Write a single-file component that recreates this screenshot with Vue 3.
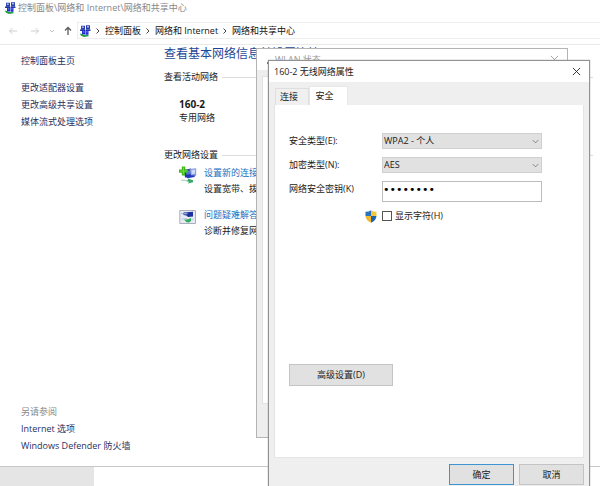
<script setup>
import { ref } from 'vue'

const crumbs = ['控制面板', '网络和 Internet', '网络和共享中心']
const tasks = ['更改适配器设置', '更改高级共享设置', '媒体流式处理选项']
const related = ['Internet 选项', 'Windows Defender 防火墙']
const security = ref('WPA2 - 个人')
const cipher = ref('AES')
const networkKey = ref('password')
const showChars = ref(false)
</script>

<template>
  <div class="window">
    <svg class="defs" width="0" height="0" aria-hidden="true">
      <symbol id="net" viewBox="0 0 12 12">
        <path d="M2 .8h4v4H2zM7 .3h4v4.200H7z" fill="#2a3fae" />
        <path d="M2.800 1.400h2v1.600h-2zM8 1h2v1.600H8z" fill="#a9b9ee" />
        <path d="M1 4.600h5V6H1zM6.600 4.400h4.900v1.500H6.600z" fill="#24379c" />
        <path d="M3 5.600h3v4H3zM6.500 5.600h3v4.200h-3z" fill="#1a2cd0" />
        <path d="M3.800 6.200h1.500v1.400H3.800zM7.200 6.200h1.500v1.400H7.200z" fill="#6f86ea" />
        <path d="M.8 8.400l2.500.5 1.700 1.200 4.500-.2v1.300L5 11.900 2 10.800z" fill="#22a048" />
      </symbol>
    </svg>

    <header class="titlebar">
      <svg class="app-icon"><use href="#net" /></svg>
      <span>控制面板\网络和 Internet\网络和共享中心</span>
    </header>

    <nav class="toolbar">
      <button class="nav" aria-label="后退"><svg viewBox="0 0 10 10"><path d="M9 5H1.500M4.500 2l-3 3 3 3" stroke="#cfcfcf" /></svg></button>
      <button class="nav fwd" aria-label="前进"><svg viewBox="0 0 10 10"><path d="M1 5h7.500M5.500 2l3 3-3 3" stroke="#cfcfcf" /></svg></button>
      <button class="nav recent" aria-label="最近"><svg viewBox="0 0 10 10"><path d="M3 4l2 2 2-2" stroke="#c0c0c0" /></svg></button>
      <button class="nav" aria-label="向上"><svg viewBox="0 0 10 10"><path d="M5 9V1.500M2 4.500l3-3 3 3" stroke="#5c5c5c" stroke-width="1.300" /></svg></button>
      <div class="address">
        <svg class="app-icon"><use href="#net" /></svg>
        <template v-for="c in crumbs" :key="c">
          <svg class="sep" viewBox="0 0 14 10"><path d="M5.500 2.500L8 5 5.500 7.500" stroke="#444" /></svg>
          <a href="#">{{ c }}</a>
        </template>
      </div>
    </nav>

    <div class="body">
      <aside class="side">
        <a class="home" href="#">控制面板主页</a>
        <a v-for="t in tasks" :key="t" href="#">{{ t }}</a>
        <div class="related">
          <span class="muted">另请参阅</span>
          <a v-for="r in related" :key="r" href="#">{{ r }}</a>
        </div>
      </aside>

      <main class="content">
        <h1>查看基本网络信息并设置连接</h1>
        <h2>查看活动网络</h2>
        <div class="active-net">
          <strong>160-2</strong>
          <span>专用网络</span>
        </div>
        <h2>更改网络设置</h2>
        <div class="action">
          <svg viewBox="0 0 18 18">
            <path d="M5 4l7-1.500V11l-6 .5z" fill="#1c2f9e" />
            <path d="M7 5l4-.8v4L7.500 9z" fill="#5570dc" />
            <path d="M10.500 3l6.700-.7v7.200l-5 1.800z" fill="#8799dc" />
            <path d="M12.500 4l3.700-.4v4l-3.700.9z" fill="#ced9f8" />
            <path d="M6.500 10l5.500-.8 4 .3-.5 1.500-7 1.200z" fill="#2138c4" />
            <path d="M2 14l7 .2V12.500l5 1.700v2L9 17.500l1-1.700z" fill="#35aa68" />
            <path d="M2 14l6 .5" stroke="#b9d8c7" />
            <path d="M2.800 .5h3.400v3h3v3.300h-3v2.700H2.800V6.800H0V3.500h2.800z" fill="#3fb81c" />
            <path d="M4.500 1.500v6.500M1 5.100h7" stroke="#74d840" />
          </svg>
          <div>
            <a href="#">设置新的连接或网络</a>
            <span>设置宽带、拨号或 VPN 连接</span>
          </div>
        </div>
        <div class="action second">
          <svg viewBox="0 0 18 18">
            <path d="M.8 2.500h15.700v13H.8z" fill="#e6eaf2" stroke="#a9b0bc" />
            <path d="M4.500 4.500l9.500-.7v4.700l-5 .5-1.500-1.500-3-.5z" fill="#1d2f9c" />
            <path d="M5 5l3.500-.2v1.400L5 6.500z" fill="#8fa6e2" />
            <path d="M2 5.500h2" stroke="#b3bdd0" />
            <path d="M5 11.500l4-.2 3-1.300v3l-2 1.500-2.500-.3z" fill="#32ac62" />
            <path d="M2.500 11l5.500-.3M12.500 11.500l2-.3" stroke="#b6c5dc" />
          </svg>
          <div>
            <a href="#">问题疑难解答</a>
            <span>诊断并修复网络问题</span>
          </div>
        </div>
      </main>
    </div>

    <footer class="status"><div></div></footer>

    <section class="status-dialog" aria-label="WLAN 状态">
      <header>
        <svg class="signal" viewBox="0 0 8 8"><path d="M0 6h2v2H0zM3 5h1v3H3z" fill="#3c9447" /></svg>
        <span>WLAN 状态</span>
        <button class="close" aria-label="关闭"><svg viewBox="0 0 10 10"><path d="M1 1l8 8M9 1L1 9" stroke="#999" /></svg></button>
      </header>
      <div class="sheet"></div>
    </section>

    <section class="dialog" role="dialog" aria-labelledby="dialog-title">
      <header>
        <span id="dialog-title">160-2 无线网络属性</span>
        <button class="close" aria-label="关闭"><svg viewBox="0 0 10 10"><path d="M1 1l8 8M9 1L1 9" stroke="#222" /></svg></button>
      </header>
      <div class="tabs" role="tablist">
        <button role="tab" aria-selected="false">连接</button>
        <button role="tab" aria-selected="true" class="on">安全</button>
      </div>
      <form class="page" @submit.prevent>
        <div class="field">
          <label for="sec">安全类型(E):</label>
          <div class="combo">
            <select id="sec" v-model="security"><option>WPA2 - 个人</option></select>
            <svg viewBox="0 0 10 10"><path d="M2 3.500l3 3 3-3" stroke="#777" /></svg>
          </div>
        </div>
        <div class="field">
          <label for="enc">加密类型(N):</label>
          <div class="combo">
            <select id="enc" v-model="cipher"><option>AES</option></select>
            <svg viewBox="0 0 10 10"><path d="M2 3.500l3 3 3-3" stroke="#777" /></svg>
          </div>
        </div>
        <div class="field">
          <label for="key">网络安全密钥(K)</label>
          <input id="key" v-model="networkKey" :type="showChars ? 'text' : 'password'" />
        </div>
        <div class="reveal">
          <svg viewBox="0 0 12 13">
            <path d="M6 .3Q8.500 2 11.500 1.800V6H6z" fill="#f4c443" />
            <path d="M6 .3Q3.500 2 .5 1.800V6H6z" fill="#2873bb" />
            <path d="M.5 6H6v6.700Q.9 10.500.5 6z" fill="#f2b731" />
            <path d="M11.500 6H6v6.700Q11.100 10.500 11.500 6z" fill="#1e64aa" />
          </svg>
          <input id="show" v-model="showChars" type="checkbox" />
          <label for="show">显示字符(H)</label>
        </div>
        <button class="btn advanced" type="button">高级设置(D)</button>
      </form>
      <div class="actions">
        <button class="btn primary">确定</button>
        <button class="btn">取消</button>
      </div>
    </section>
  </div>
</template>

<style>
body { margin: 0; background: #fff; }
</style>

<style scoped>
* { box-sizing: border-box; }
.window {
  position: relative;
  display: flex;
  flex-direction: column;
  height: 100vh;
  overflow: hidden;
  background: #fff;
  color: #1a1a1a;
  font: 9px/16px "Open Sans", "Noto Sans CJK SC", sans-serif;
  white-space: nowrap;
}
.defs { position: absolute; }
svg { display: block; flex: none; fill: none; }
a { color: inherit; text-decoration: none; }
button, input, select { font: inherit; color: inherit; margin: 0; padding: 0; }
.app-icon { width: 12px; height: 12px; }

.titlebar { display: flex; align-items: center; gap: 2px; height: 16px; padding-left: 4px; color: #888; }
.toolbar {
  display: flex;
  align-items: center;
  height: 29px;
  padding: 1px 0 0 8px;
  border-bottom: 1px solid #e9e9e9;
}
.nav { width: 10px; height: 10px; border: 0; background: none; }
.nav.fwd { margin-left: 12px; }
.nav.recent { margin: 0 6px 0 7px; }
.address {
  display: flex;
  align-items: center;
  flex: 1;
  height: 17px;
  margin-left: 4px;
  padding-left: 1px;
  border: 1px solid #ededed;
  border-right: 0;
  color: #111;
}
.sep { width: 14px; height: 10px; }

.body { display: flex; flex: 1; min-height: 0; }
.side {
  display: flex;
  flex-direction: column;
  width: 164px;
  padding: 7px 0 12px 21px;
  line-height: 17px;
  color: #2a2f5e;
}
.home { margin-bottom: 10px; }
.related { display: flex; flex-direction: column; margin-top: auto; }
.muted { color: #888; }
.content { display: flex; flex-direction: column; flex: 1; padding: 1px 7px 0 0; }
h1 { margin: 0; font-size: 12px; line-height: 16px; font-weight: 400; color: #1d4796; }
h2 { display: flex; align-items: center; gap: 4px; margin: 7px 0 0; font-size: 9px; line-height: 16px; font-weight: 400; }
h2::after { content: ""; flex: 1; height: 1px; background: #dcdcdc; }
.active-net { display: flex; flex-direction: column; padding: 12px 0 15px 15px; line-height: 14px; }
.active-net strong { font-size: 10px; }
.action { display: flex; gap: 7px; padding: 2px 0 0 15px; }
.action svg { width: 18px; height: 18px; margin-top: 1px; }
.action div { display: flex; flex-direction: column; }
.action a { color: #1a70c0; }
.action.second { padding-top: 10px; }

.status { height: 20px; border-top: 1px solid #c4c8c6; }
.status div { width: 94px; height: 100%; background: #e5e5e5; }

.close { width: 9px; height: 9px; border: 0; background: none; }
.status-dialog {
  position: absolute;
  top: 48px;
  right: 32px;
  bottom: 48px;
  left: 256px;
  display: flex;
  flex-direction: column;
  padding-bottom: 33px;
  background: #eee;
  border: 1px solid #b4b4b4;
}
.status-dialog header {
  display: flex;
  align-items: center;
  height: 21px;
  padding: 0 8px 0 10px;
  background: #fff;
  color: #999;
}
.status-dialog .close { margin-left: auto; }
.signal { width: 8px; height: 8px; }
.sheet { flex: 1; margin: 6px 5px 0; background: #fff; border: 1px solid #e2e2e2; }

.dialog {
  position: absolute;
  top: 60px;
  right: 10px;
  bottom: -6px;
  left: 268px;
  display: flex;
  flex-direction: column;
  padding: 0 5px;
  background: #efefef;
  border: 1px solid #929292;
  box-shadow: 0 0 1px #888;
}
.dialog header {
  display: flex;
  align-items: center;
  justify-content: space-between;
  height: 21px;
  margin: 0 -5px;
  padding: 0 8px 0 5px;
  background: #fff;
}
.tabs { display: flex; align-items: flex-end; height: 23px; padding-left: 1px; }
.tabs button { height: 17px; width: 34px; padding-right: 6px; border: 1px solid #dedede; border-bottom: 0; background: #f0f0f0; }
.tabs .on { height: 19px; width: 39px; padding-right: 8px; background: #fff; border-color: #e8e8e8; }
.page {
  display: flex;
  flex-direction: column;
  flex: 1;
  padding: 28px 41px 71px 14px;
  background: #fff;
  border: 1px solid #e4e4e4;
  border-top: 0;
}
.field { display: flex; margin-bottom: 8px; line-height: 16px; }
.field:nth-child(-n + 2) { height: 16px; }
.field label { width: 93px; }
.combo { display: grid; flex: 1; height: 16px; align-items: center; }
.combo select, .combo svg { grid-area: 1 / 1; }
.combo select { appearance: none; width: 100%; height: 16px; padding: 0 1px; border: 1px solid #d0d0d0; border-radius: 0; background: #e1e1e1; line-height: 14px; }
.combo svg { width: 9px; height: 9px; margin-right: 2px; justify-self: end; pointer-events: none; }
.field > input { flex: 1; min-width: 0; height: 21px; padding: 0 0 4px; border: 1px solid #bcbcbc; background: #fff; }
.field > input[type="password"] { font-family: "DejaVu Sans", sans-serif; font-size: 11px; color: #000; }
.reveal { display: flex; align-items: center; gap: 3px; margin-top: -2px; padding-left: 76px; }
.reveal svg { width: 12px; height: 13px; margin-right: 2px; }
.reveal input { appearance: none; width: 10px; height: 10px; border: 1px solid #555; background: #fff; }
.reveal input:checked { background: #0078d7; }
.btn { height: 21px; width: 65px; border: 1px solid #c4c4c4; background: #e1e1e1; }
.advanced { width: 104px; height: 22px; margin-top: auto; }
.actions { display: flex; justify-content: flex-end; gap: 5px; padding: 6px 0; }
.primary { border-color: #3c94d2; }
</style>
